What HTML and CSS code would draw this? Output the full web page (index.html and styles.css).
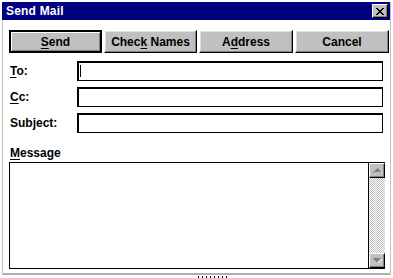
FILE: index.html
```html
<!DOCTYPE html>
<html lang="en">
<head>
    <meta charset="UTF-8">
    <title>Send Mail</title>
    <link rel="stylesheet" href="styles.css">
</head>
<body>
    <div class="window">
        <!-- Title bar -->
        <div class="titlebar">
            <span class="title">Send Mail</span>
            <button class="close" aria-label="Close">
                <svg width="8" height="7" viewBox="0 0 8 7">
                    <path d="M0 0h2v1h1v1h2V1h1V0h2v1H7v1H6v1H5v1h1v1h1v1h1v1H6V6H5V5H3v1H2v1H0V6h1V5h1V4h1V3H2V2H1V1H0z" fill="#000"/>
                </svg>
            </button>
        </div>

        <div class="content">
            <!-- Toolbar -->
            <div class="buttons">
                <button class="btn default"><u>S</u>end</button>
                <button class="btn">Chec<u>k</u> Names</button>
                <button class="btn">A<u>d</u>dress</button>
                <button class="btn">Cancel</button>
            </div>

            <!-- Address fields -->
            <div class="fields">
                <label class="label"><u>T</u>o:</label>
                <div class="field"><span class="caret"></span></div>
                <label class="label"><u>C</u>c:</label>
                <div class="field"></div>
                <label class="label">Subject:</label>
                <div class="field"></div>
            </div>

            <div class="message-label"><u>M</u>essage</div>
            <div class="message">
                <div class="message-text"></div>
                <div class="scrollbar">
                    <div class="scroll-btn">
                        <svg width="9" height="5" viewBox="0 0 9 5"><path d="M4 0h1v1h1v1h1v1h1v1h1v1H0V4h1V3h1V2h1V1h1z" fill="#808080"/><path d="M1 5h8V4" stroke="#fff" fill="none"/></svg>
                    </div>
                    <div class="track"></div>
                    <div class="scroll-btn">
                        <svg width="9" height="5" viewBox="0 0 9 5"><path d="M0 0h9v1H8v1H7v1H6v1H5v1H4V4H3V3H2V2H1V1H0z" fill="#808080"/><path d="M8.5 0.5v1h-1v1h-1v1h-1v1h-1" stroke="#fff" fill="none"/></svg>
                    </div>
                </div>
            </div>
        </div>
    </div>
    <div class="taskbar"><span class="grip"></span></div>
</body>
</html>
```

FILE: styles.css
```css
/* Page */
body {
    margin: 0;
    width: 393px;
    height: 278px;
    background: #fff;
    font-family: "Liberation Sans", Arial, sans-serif;
    font-size: 12px;
    font-weight: bold;
    color: #000;
    overflow: hidden;
}

/* Window frame */
.window {
    margin: 2px 0 0 2px;
    width: 387px;
    border-left: 1px solid #c0c0c0;
    border-right: 1px solid #c0c0c0;
    border-bottom: 2px solid #b0b0b0;
}

/* Title bar */
.titlebar {
    height: 18px;
    margin-left: -1px;
    background: #000080;
    display: flex;
    align-items: center;
    justify-content: space-between;
    padding: 0 2px 0 4px;
}

.title {
    color: #fff;
    font-size: 12px;
    letter-spacing: 0.2px;
}

.close {
    width: 16px;
    height: 14px;
    padding: 0;
    background: #c0c0c0;
    border: 1px solid;
    border-color: #fff #000 #000 #fff;
    box-shadow: inset -1px -1px 0 #808080;
    display: flex;
    align-items: center;
    justify-content: center;
}

.content {
    padding: 10px 3px 4px 6px;
}

/* Buttons */
.buttons {
    display: grid;
    grid-template-columns: 93px 93px 94px 94px;
    column-gap: 2px;
}

.btn {
    height: 23px;
    background: #c0c0c0;
    border: 1px solid;
    border-color: #fff #000 #000 #fff;
    box-shadow: inset -1px -1px 0 #808080, inset 1px 1px 0 #dfdfdf;
    font-family: inherit;
    font-size: 12px;
    font-weight: bold;
    color: #000;
    padding: 0;
}

.btn.default {
    border: 2px solid #000;
    box-shadow: inset 1px 1px 0 #fff, inset -1px -1px 0 #808080;
}

.btn u,
.label u,
.message-label u {
    text-decoration-thickness: 1px;
    text-underline-offset: 2px;
}

/* Fields */
.fields {
    display: grid;
    grid-template-columns: 68px 306px;
    row-gap: 6px;
    align-items: center;
    margin-top: 8px;
}

.label {
    padding-left: 1px;
}

.field {
    height: 20px;
    box-sizing: border-box;
    border: 1px solid #000;
    box-shadow: inset 1px 1px 0 #000;
    position: relative;
}

.caret {
    position: absolute;
    left: 2px;
    top: 3px;
    width: 1px;
    height: 12px;
    background: #000;
}

/* Message */
.message-label {
    margin-top: 13px;
    height: 14px;
    line-height: 14px;
    padding-left: 1px;
    margin-bottom: 2px;
}

.message {
    width: 376px;
    height: 107px;
    box-sizing: border-box;
    border: 1px solid #000;
    border-right: none;
    display: flex;
}

.message-text {
    flex: 1;
    border-right: 1px solid #000;
}

.scrollbar {
    width: 16px;
    display: flex;
    flex-direction: column;
}

.scroll-btn {
    height: 15px;
    box-sizing: border-box;
    background: #c0c0c0;
    border: 1px solid;
    border-color: #fff #000 #000 #fff;
    box-shadow: inset -1px -1px 0 #808080;
    display: flex;
    align-items: center;
    justify-content: center;
}

.track {
    flex: 1;
    background-color: #fff;
    background-image: repeating-conic-gradient(#c0c0c0 0 25%, #fff 0 50%);
    background-size: 2px 2px;
}

/* Strip below the window */
.taskbar {
    height: 3px;
    position: relative;
}

.grip {
    position: absolute;
    left: 198px;
    bottom: 0;
    width: 30px;
    height: 2px;
    background: repeating-linear-gradient(90deg, #000 0 1px, transparent 1px 4px);
}
```
